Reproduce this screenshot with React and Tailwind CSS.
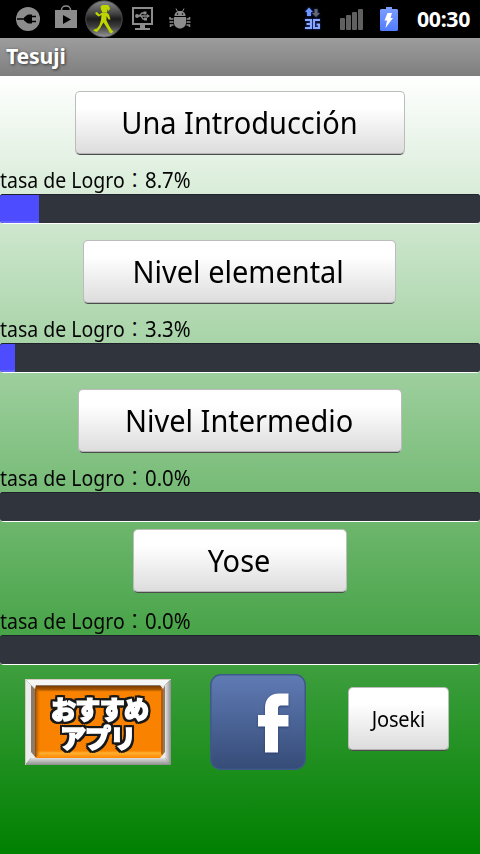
import clsx from 'clsx'

const levels = [
  { name: 'Una Introducción', rate: '8.7', box: 'mt-[15px] ml-[75px] w-[330px]', gap: 'h-[38px] pt-[9px]', fill: 39 },
  { name: 'Nivel elemental', rate: '3.3', box: 'mt-4 ml-[83px] w-[313px]', gap: 'h-[38px] pt-[9px]', fill: 15 },
  { name: 'Nivel Intermedio', rate: '0.0', box: 'mt-4 ml-[78px] w-[324px]', gap: 'h-[38px] pt-[9px]', fill: 0 },
  { name: 'Yose', rate: '0.0', box: 'mt-[7px] ml-[133px] w-[214px]', gap: 'h-[41px] pt-[12px]', fill: 0 },
]

function Button({ className, children }) {
  return (
    <button
      className={clsx(
        'flex items-center justify-center rounded-[5px] border border-[#bcbcbc] border-b-[#4c4c4c] bg-linear-to-b/srgb from-white from-25% to-[#dcdcdc] text-black shadow-[inset_0_-1px_0_#b4b4b4]',
        className,
      )}
    >
      {children}
    </button>
  )
}

function ProgressBar({ fill }) {
  return (
    <div className="h-[30px] w-full rounded-[4px] border-b border-white bg-[#30343d]">
      <div className="flex h-[29px] overflow-hidden rounded-[3px] border-t border-[#20232b] bg-[#30343d]">
        {fill > 0 && <div className="border-b-2 border-[#6262ff] bg-[#4d4dff]" style={{ width: fill }} />}
      </div>
    </div>
  )
}

function Level({ level }) {
  return (
    <section className="flex flex-col items-start">
      <Button className={clsx('h-16 pr-0.5 whitespace-nowrap text-[30.5px]', level.box)}>
        <span className="scale-x-[0.95]">{level.name}</span>
      </Button>
      <p className={clsx('mt-px flex w-full whitespace-nowrap text-[21.3px] leading-[30px] text-[#050505]', level.gap)}>
        <span className="w-[124px] origin-left scale-x-[0.915]">tasa de Logro</span>
        <span className="w-[21px] font-light">：</span>
        <span className="origin-left scale-x-[0.955]">{level.rate}%</span>
      </p>
      <ProgressBar fill={level.fill} />
    </section>
  )
}

function PlugIcon() {
  return (
    <svg width="26" height="26" viewBox="0 0 26 26">
      <circle cx="13" cy="13" r="12" fill="#8c8c8c" />
      <path d="M2 13h9M16 10.500h5M16 15.500h5" stroke="#000" strokeWidth="1.700" />
      <path d="M17 8.500v9h-3c-2 0-3-1.500-5-3v-3c2-1.500 3-3 5-3z" fill="#000" />
    </svg>
  )
}

function StoreIcon() {
  return (
    <svg width="24" height="25" viewBox="0 0 24 25">
      <path d="M7.500 6V5a4 4 0 0 1 4-4h1a4 4 0 0 1 4 4v1" fill="none" stroke="#8c8c8c" strokeWidth="1.500" />
      <path d="M1 5h22v18H1z" fill="#8c8c8c" />
      <path d="M9 10v9l8-4.500z" fill="#000" />
    </svg>
  )
}

function WalkerIcon() {
  return (
    <svg width="38" height="38" viewBox="0 0 38 38">
      <defs>
        <linearGradient id="orb" x2="0" y2="1">
          <stop offset="0" stopColor="#8a8a8a" />
          <stop offset="0.35" stopColor="#444" />
          <stop offset="0.5" stopColor="#1c1c1c" />
          <stop offset="0.7" stopColor="#3c3c3c" />
          <stop offset="1" stopColor="#9a9a9a" />
        </linearGradient>
      </defs>
      <circle cx="19" cy="19" r="18.200" fill="url(#orb)" stroke="#4c4c4c" />
      <g fill="#bed600">
        <path d="M15.500 6.500l2-1.500h5.500l1.500 2 .5 2-1.500 2-1-2-.5 3.500h-4.500l-1.500-3z" />
        <path d="M10.500 12.500l1.500-.5 2.500 2.500 2.500-2h4.500l2.500 2 1.500 5h-2l-2-3.500v4.500l2.500 5 3 5 1.500.500-1.500 2h-2l-3-5-3.500-5.500-1 1.500-2.500 4.500-3 3.500-1.500-.500-2-.500.500-1.500 3-1 2.500-3.500 1.500-5 .5-5-3 1.500-3-2.500z" />
      </g>
    </svg>
  )
}

function UsbMonitorIcon() {
  return (
    <svg width="22" height="25" viewBox="0 0 22 25">
      <path d="M0 1h21v18H0z" fill="#8c8c8c" />
      <path d="M2 3h17v14H2z" fill="#000" />
      <path d="M4 10h12M7 10l3-3h2M9 10l2 3h3" stroke="#8c8c8c" strokeWidth="1.300" fill="none" />
      <path d="M15 8l3 2-3 2zM11.500 5.500h3v3h-3zM12 11.500h3v3h-3z" fill="#8c8c8c" />
      <circle cx="5" cy="10" r="1.900" fill="#8c8c8c" />
      <path d="M8 19h5v3h5v2H3v-2h5z" fill="#8c8c8c" />
    </svg>
  )
}

function BugIcon() {
  return (
    <svg width="22" height="21" viewBox="0 0 22 21">
      <path d="M7 .5l1.500 3M15 .5l-1.500 3" stroke="#8c8c8c" />
      <path d="M5.500 8c0-3 2-5 5.500-5s5.500 2 5.500 5z" fill="#8c8c8c" />
      <path d="M5 9h12v6c0 3-3 5.500-6 5.500s-6-2.500-6-5.500z" fill="#8c8c8c" />
      <path d="M4.500 11H1V9M4.500 14H.5M4.500 17H1.500v2M17.500 11h3V9M17.500 14h4M17.500 17h3v2" stroke="#8c8c8c" strokeWidth="1.500" fill="none" />
      <circle cx="8.500" cy="6" r=".8" />
      <circle cx="13.500" cy="6" r=".8" />
    </svg>
  )
}

function NetworkIcon() {
  return (
    <svg width="18" height="24" viewBox="0 0 18 24" className="drop-shadow-[0_0_1px_#315effaa]">
      <path d="M5 .5l4 4.500H7v4H3V5H1z" fill="#6e94ff" />
      <path d="M10.500 2h3v4H16l-4 4-4-4h2.500z" fill="#666" />
      <path d="M1 13h6v8H1M2.500 17h4M16 13H10v8h5v-3.500h-2.500" fill="none" stroke="#8aa6ff" strokeWidth="2" />
    </svg>
  )
}

function SignalIcon() {
  return (
    <svg width="24" height="22" viewBox="0 0 24 22">
      <g fill="#606060">
        <rect x="0" y="9" width="5" height="12" rx="1" />
        <rect x="6" y="6" width="5" height="15" rx="1" />
        <rect x="12" y="3" width="5" height="18" rx="1" />
        <rect x="18" y="0" width="5" height="21" rx="1" />
      </g>
    </svg>
  )
}

function BatteryIcon() {
  return (
    <svg width="18" height="25" viewBox="0 0 18 25">
      <defs>
        <linearGradient id="charge" x2="0" y2="1">
          <stop stopColor="#7d9fff" />
          <stop offset="1" stopColor="#527cff" />
        </linearGradient>
      </defs>
      <path d="M6 0h6v2h5l1 1v20l-1 1H1l-1-1V3l1-1h5z" fill="url(#charge)" />
      <path d="M7.500 6h4.500l-1.500 5H13L5.500 21l1.500-7.500H4.500z" fill="#fff" />
    </svg>
  )
}

function StatusBar() {
  return (
    <header className="flex h-[38px] items-start bg-black text-white">
      <div className="ml-[15px] pt-[6px]"><PlugIcon /></div>
      <div className="ml-[13px] pt-[5px]"><StoreIcon /></div>
      <div className="ml-[7px]"><WalkerIcon /></div>
      <div className="ml-[9px] pt-[6px]"><UsbMonitorIcon /></div>
      <div className="ml-[15px] pt-[8px]"><BugIcon /></div>
      <div className="ml-auto mr-[18px] pt-[7px]"><NetworkIcon /></div>
      <div className="mr-4 pt-[9px]"><SignalIcon /></div>
      <div className="mr-[19px] pt-[7px]"><BatteryIcon /></div>
      <span className="mr-[9px] w-[54px] whitespace-nowrap text-[21.3px] leading-[38px] font-bold tracking-[-0.35px]">00:30</span>
    </header>
  )
}

function RecommendedApps() {
  return (
    <button className="block h-[86px] w-[146px]">
      <svg width="146" height="86" viewBox="0 0 146 86">
        <defs>
          <linearGradient id="plate" x2="0" y2="1">
            <stop stopColor="#7b3c00" />
            <stop offset="0.05" stopColor="#a85600" />
            <stop offset="0.08" stopColor="#f98300" />
            <stop offset="0.9" stopColor="#f98300" />
            <stop offset="0.93" stopColor="#ffb030" />
            <stop offset="1" stopColor="#ff8500" />
          </linearGradient>
          <linearGradient id="edge">
            <stop stopColor="#8a4500" />
            <stop offset="1" stopColor="#f98300" stopOpacity="0" />
          </linearGradient>
          <linearGradient id="frameRight">
            <stop stopColor="#e4e4e4" />
            <stop offset="1" stopColor="#8e8e8e" />
          </linearGradient>
          <linearGradient id="frameBottom" x2="0" y2="1">
            <stop stopColor="#dedede" />
            <stop offset="1" stopColor="#8e8e8e" />
          </linearGradient>
        </defs>
        <path d="M0 0h146L140 6H6z" fill="#f6f6f6" />
        <path d="M0 0l6 6v73L0 86z" fill="#ececec" />
        <path d="M146 0v86l-6-7V6z" fill="url(#frameRight)" />
        <path d="M0 86h146l-6-7H6z" fill="url(#frameBottom)" />
        <path d="M0 .5h146M.5 0v86" stroke="#d8cac2" />
        <path d="M6 6h134v73H6z" fill="#8b7a68" />
        <path d="M10 7h128v72H10z" fill="url(#plate)" />
        <path d="M10 10h6v64l-6 5z" fill="url(#edge)" />
        <path d="M138 9h-2v65l2 5z" fill="#b95b00" />
        <path d="M6 6h5l-1 4zM140 6h-5l3 4zM6 79v-6l5 6zM140 79v-6l-5 6z" fill="#eee" />
        <g
          className="font-['Noto_Sans_CJK_JP',sans-serif] font-black [filter:drop-shadow(2px_0_0_#181818)_drop-shadow(-2px_0_0_#181818)_drop-shadow(0_2px_0_#181818)_drop-shadow(0_-2px_0_#181818)]"
          fill="#fff"
          stroke="#fff"
          strokeWidth="1.500"
        >
          <text x="26" y="40" fontSize="25" textLength="98">おすすめ</text>
          <text x="35" y="68.500" fontSize="26" textLength="76">アプリ</text>
        </g>
      </svg>
    </button>
  )
}

function FacebookButton() {
  return (
    <button className="block h-24 w-24">
      <svg width="96" height="96" viewBox="0 0 96 96">
        <defs>
          <linearGradient id="fb" x2="0" y2="1">
            <stop stopColor="#607bb5" />
            <stop offset="1" stopColor="#364c78" />
          </linearGradient>
        </defs>
        <rect x=".8" y=".8" width="94.400" height="94.400" rx="10" fill="url(#fb)" stroke="#3d5a88" strokeWidth="1.500" />
        <path
          d="M55 78.500V52.500H48V41h7v-7c0-9 5-14.500 14-14.500h9.500v12H71c-2 0-3 1-3 3V41h10.500v11.500H68v26z"
          fill="#fff"
          className="drop-shadow-[0_1px_1px_#263e6b]"
        />
      </svg>
    </button>
  )
}

export default function App() {
  return (
    <div className="flex h-[854px] w-[480px] flex-col overflow-hidden font-['Noto_Sans','Noto_Sans_CJK_JP',sans-serif]">
      <StatusBar />
      <h1 className="h-[38px] bg-linear-to-b/srgb from-[#9d9d9d] to-[#7e7e7e] pl-1.5 text-[21.3px] leading-[36px] font-bold tracking-[-0.2px] text-white [text-shadow:1px_1px_3px_#333]">
        Tesuji
      </h1>
      <main className="flex-1 bg-linear-to-b/srgb from-white to-[#008000]">
        {levels.map(level => (
          <Level key={level.name} level={level} />
        ))}
        <div className="mt-[9px] flex h-24 items-start pl-[25px]">
          <div className="mt-[5px]"><RecommendedApps /></div>
          <div className="ml-[39px]"><FacebookButton /></div>
          <Button className="mt-[13px] ml-[42px] h-16 w-[101px] text-[21.3px]">
            <span className="scale-x-[0.94] tracking-[-0.2px]">Joseki</span>
          </Button>
        </div>
      </main>
    </div>
  )
}
